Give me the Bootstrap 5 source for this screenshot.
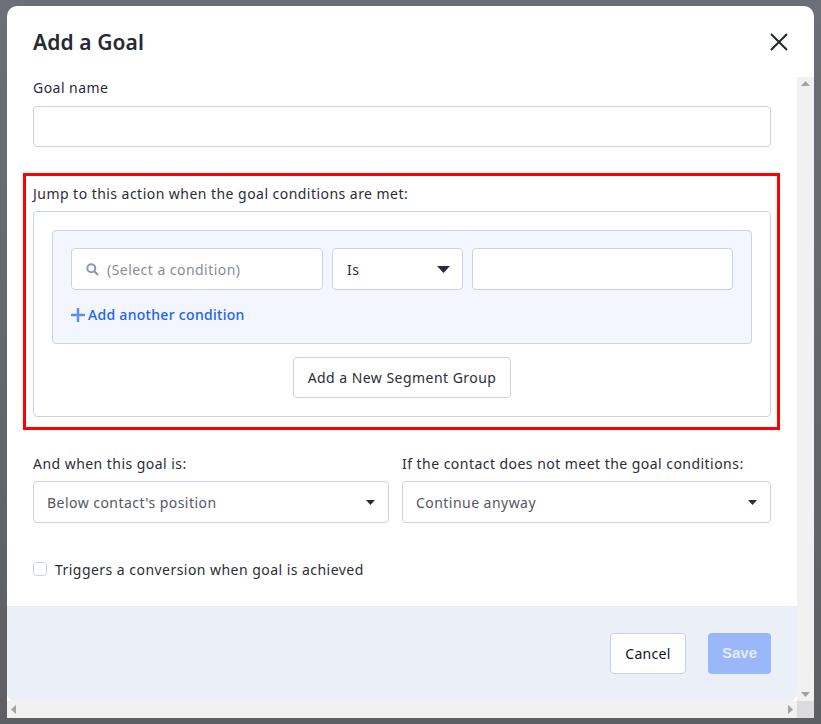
<!DOCTYPE html>
<html lang="en"><head><meta charset="utf-8"><title>Add a Goal</title>
<link href="https://cdn.jsdelivr.net/npm/bootstrap@5.3.0/dist/css/bootstrap.min.css" rel="stylesheet">
<style>
:root{--line:#cbd2e3;--ink:#2b2d36}
html,body{height:100%}
body{background:linear-gradient(#6d6f78,#5d5f65);overflow:hidden;font-family:"Noto Sans","Open Sans",sans-serif;font-size:14px;letter-spacing:.46px;color:var(--ink)}
.shell{position:absolute;left:7px;top:6px;width:807px;height:712px;background:#fff;border-radius:10px 10px 0 0;overflow:hidden}
.head{height:71px;padding:2px 26px 0}
.head h1{font-size:21px;font-weight:600;margin:0;letter-spacing:.1px;color:#272932}
.closer{background:none;border:0;padding:0;width:18px;height:18px;margin-bottom:2px}
.midrow{height:624px}
.pane{width:790px}
.inner{padding:0 26px}
.lbl{display:block;line-height:21px;margin:0 0 8px}
.ctl{height:41px;border-color:var(--line);border-radius:4px;font-size:14px;color:#555862;letter-spacing:.46px;box-shadow:none}
.tall{height:42px}
.redbox{border:3px solid #f00;margin:26px -9px 0 -10px;padding:7px 6px 10px 7px}
.redbox .lbl{margin-bottom:7px}
.outerbox{border:1px solid var(--line);border-radius:4px;padding:18px;background:#fff}
.panelbox{background:#f3f6fe;border:1px solid var(--line);border-radius:4px;padding:17px 18px 18px}
.cgap{column-gap:9px}
.finder{width:252px;flex:none;background:#fff;border:1px solid var(--line);border-radius:4px;padding-left:14px;gap:8px}
.finder span{color:#8a8d96}
.pick-is{width:131px;flex:none;padding-left:14px;color:var(--ink);background-size:13px 7px;background-position:right 12px center;background-image:url("data:image/svg+xml,%3Csvg xmlns='http://www.w3.org/2000/svg' viewBox='0 0 13 7'%3E%3Cpath d='M0 0h13L6.5 7z' fill='%232b2d36'/%3E%3C/svg%3E")}
.valbox{width:261px;flex:none}
.adder{color:#1a62f6;text-decoration:none;line-height:21px;margin-top:14px;font-weight:500;gap:3px;letter-spacing:.3px}
.ghost{height:41px;width:218px;background:#fff;border:1px solid var(--line);border-radius:4px;color:var(--ink);font-size:14px;letter-spacing:.46px;padding:0;margin-top:13px}
.duo{margin-top:23px;column-gap:13px}
.colleft{width:356px}.colright{width:369px}
.duo .lbl{margin-bottom:7px;white-space:nowrap}
.pick{padding-left:13px;background-size:9px 5px;background-position:right 13px center;background-image:url("data:image/svg+xml,%3Csvg xmlns='http://www.w3.org/2000/svg' viewBox='0 0 9 5'%3E%3Cpath d='M0 0h9L4.500 5z' fill='%232b2d36'/%3E%3C/svg%3E")}
.checkrow{margin-top:36px;line-height:21px;gap:8px;padding-bottom:26px}
.checkrow input{width:14px;height:14px;margin:0;border:1px solid var(--line);border-radius:3px;flex:none;position:relative;top:-1px}
.foot{height:95px;background:#ebeff8;border-radius:0 0 8px 8px;padding:27px 26px;gap:22px}
.cancel{width:76px;height:41px;background:#fff;border:1px solid var(--line);border-radius:4px;color:#10141f;font-size:14px;padding:0;letter-spacing:.3px}
.savebtn{width:63px;height:41px;background:#9ab7f9;border:0;border-radius:4px;color:#e4ebfe;font-family:"Liberation Sans",sans-serif;font-weight:700;font-size:15px;letter-spacing:0;padding:0}
.vbar{width:17px;background:#f1f1f1}
.hbar{height:17px;background:#f1f1f1}
.corner{width:17px;height:17px;background:#dcdcdc}
.tri{display:block}
</style></head><body>
<div class="shell d-flex flex-column">
  <div class="head d-flex align-items-center justify-content-between">
    <h1>Add a Goal</h1>
    <button class="closer d-flex" aria-label="Close"><svg width="18" height="18" viewBox="0 0 18 18"><path d="M1 1l16 16M17 1L1 17" stroke="#24262e" stroke-width="2" fill="none"/></svg></button>
  </div>
  <div class="midrow d-flex">
    <div class="pane d-flex flex-column">
      <div class="inner">
        <label class="lbl">Goal name</label>
        <input class="form-control ctl" type="text">
        <div class="redbox">
          <label class="lbl">Jump to this action when the goal conditions are met:</label>
          <div class="outerbox d-flex flex-column align-items-center">
            <div class="panelbox align-self-stretch">
              <div class="d-flex cgap">
                <div class="finder tall d-flex align-items-center">
                  <svg width="13" height="13" viewBox="0 0 13 13"><circle cx="5.300" cy="5.300" r="4" fill="none" stroke="#8e98ad" stroke-width="2"/><path d="M8.300 8.300l3.700 3.700" stroke="#8e98ad" stroke-width="2.200"/></svg>
                  <span>(Select a condition)</span>
                </div>
                <select class="form-select ctl tall pick-is"><option>Is</option></select>
                <input class="form-control ctl tall valbox" type="text">
              </div>
              <a href="#" class="adder d-flex align-items-center">
                <svg width="14" height="14" viewBox="0 0 14 14"><path d="M7 0v14M0 7h14" stroke="#5c8df5" stroke-width="2.400"/></svg>
                <span>Add another condition</span>
              </a>
            </div>
            <button class="ghost" type="button">Add a New Segment Group</button>
          </div>
        </div>
        <div class="duo d-flex">
          <div class="colleft">
            <label class="lbl">And when this goal is:</label>
            <select class="form-select ctl tall pick"><option>Below contact's position</option></select>
          </div>
          <div class="colright">
            <label class="lbl">If the contact does not meet the goal conditions:</label>
            <select class="form-select ctl tall pick"><option>Continue anyway</option></select>
          </div>
        </div>
        <div class="checkrow d-flex align-items-center">
          <input type="checkbox" class="form-check-input" id="conv">
          <label for="conv">Triggers a conversion when goal is achieved</label>
        </div>
      </div>
      <div class="foot d-flex justify-content-end">
        <button class="cancel" type="button">Cancel</button>
        <button class="savebtn" type="button">Save</button>
      </div>
    </div>
    <div class="vbar d-flex flex-column justify-content-between align-items-center py-1">
      <svg class="tri" width="9" height="5" viewBox="0 0 9 5"><path d="M4.500 0L9 5H0z" fill="#a3a3a3"/></svg>
      <svg class="tri" width="9" height="5" viewBox="0 0 9 5"><path d="M0 0h9L4.500 5z" fill="#a3a3a3"/></svg>
    </div>
  </div>
  <div class="d-flex">
    <div class="hbar flex-grow-1 d-flex justify-content-between align-items-center px-1">
      <svg class="tri" width="5" height="9" viewBox="0 0 5 9"><path d="M5 0v9L0 4.500z" fill="#a3a3a3"/></svg>
      <svg class="tri" width="5" height="9" viewBox="0 0 5 9"><path d="M0 0v9l5-4.500z" fill="#a3a3a3"/></svg>
    </div>
    <div class="corner"></div>
  </div>
</div>
</body></html>
